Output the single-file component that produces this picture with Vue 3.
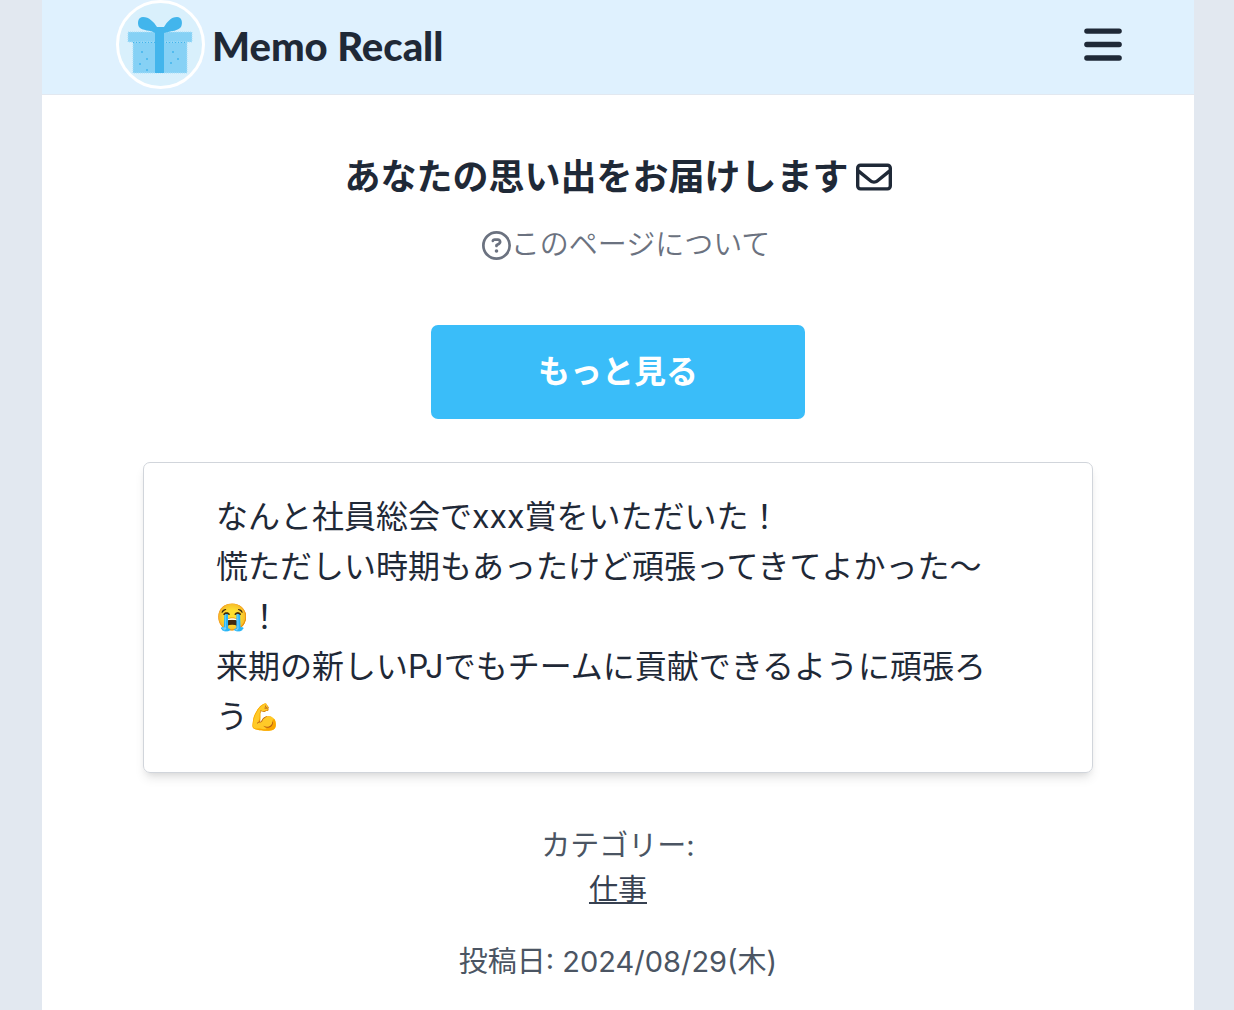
<script setup>
const memo = [
  [{ text: 'なんと社員総会でxxx賞をいただいた！' }],
  [
    { text: '慌ただしい時期もあったけど頑張ってきてよかった〜' },
    { text: '😭', emoji: true },
    { text: '！' },
  ],
  [
    { text: '来期の新しいPJでもチームに貢献できるように頑張ろ' },
    { text: 'う' },
    { text: '💪', emoji: true },
  ],
]
</script>

<template>
  <div class="page">
    <header class="header">
      <a class="brand" href="#">
        <svg class="logo" viewBox="0 0 89 89" aria-hidden="true">
          <circle cx="44.500" cy="44.500" r="43" fill="#d9f0fc" stroke="#fff" stroke-width="3" />
          <path d="M17 42h54v31H17z" fill="#86d1f5" />
          <path d="M12 32h64v10H12z" fill="#86d1f5" />
          <path d="M12 32h64v10H12zM17 42v31h54V42" stroke="#a9dff8" stroke-dasharray="1 1" fill="none" />
          <path d="M17 42.500h54" stroke="#42b5ec" stroke-dasharray="1 2" fill="none" />
          <path d="M39 31h9v42h-9z" fill="#42b5ec" />
          <path d="M39 33C35 30 26 31 23 27c-2-4-1-10 4-10 6 0 11 5 14 10h7c3-5 7-10 13-10 5 0 6 6 4 10-3 4-10 4-13 5l-4 1z" fill="#42b5ec" />
          <g fill="#42b5ec">
            <circle cx="26" cy="52" r="1" /><circle cx="31" cy="59" r="1" /><circle cx="24" cy="64" r="1" /><circle cx="31" cy="70" r="1" />
            <circle cx="57" cy="52" r="1" /><circle cx="62" cy="59" r="1" /><circle cx="55" cy="63" r="1" />
          </g>
        </svg>
        <span class="name">Memo Recall</span>
      </a>
      <button class="menu" type="button" aria-label="メニュー">
        <svg viewBox="0 0 448 512" width="38" height="43" fill="currentColor">
          <rect y="64" width="448" height="64" rx="32" />
          <rect y="224" width="448" height="64" rx="32" />
          <rect y="384" width="448" height="64" rx="32" />
        </svg>
      </button>
    </header>

    <main class="main">
      <h1 class="title">
        あなたの思い出をお届けします
        <svg viewBox="0 0 512 512" width="36" height="36" fill="currentColor" aria-hidden="true">
          <path d="M64 112c-8.800 0-16 7.200-16 16v22.100L220.500 291.700c20.700 17 50.400 17 71.100 0L464 150.100V128c0-8.800-7.200-16-16-16H64zM48 212.200V384c0 8.800 7.200 16 16 16H448c8.800 0 16-7.200 16-16V212.200L322 328.800c-38.400 31.500-93.700 31.500-132 0L48 212.200zM0 128C0 92.700 28.700 64 64 64H448c35.300 0 64 28.700 64 64V384c0 35.300-28.700 64-64 64H64c-35.300 0-64-28.700-64-64V128z" />
        </svg>
      </h1>
      <a class="about" href="#">
        <svg viewBox="0 0 512 512" width="29" height="29" fill="currentColor" aria-hidden="true">
          <path d="M464 256A208 208 0 1 0 48 256a208 208 0 1 0 416 0zM0 256a256 256 0 1 1 512 0A256 256 0 1 1 0 256zm169.800-90.700c7.900-22.300 29.100-37.300 52.800-37.300h58.300c34.900 0 63.100 28.300 63.100 63.100c0 22.600-12.100 43.500-31.700 54.800L280 264.400c-.2 13-10.900 23.600-24 23.600c-13.300 0-24-10.700-24-24V250.500c0-8.600 4.600-16.500 12.100-20.800l44.300-25.400c4.700-2.700 7.600-7.700 7.600-13.100c0-8.400-6.800-15.100-15.100-15.100H222.600c-3.400 0-6.400 2.100-7.500 5.300l-.4 1.200c-4.400 12.500-18.200 19-30.600 14.600s-19-18.200-14.600-30.600l.4-1.200zM224 352a32 32 0 1 1 64 0 32 32 0 1 1-64 0z" />
        </svg>
        <span>このページについて</span>
      </a>
      <button class="more" type="button">もっと見る</button>
      <article class="card">
        <p v-for="(line, i) in memo" :key="i"><span v-for="part in line" :key="part.text" :class="{ emoji: part.emoji }">{{ part.text }}</span></p>
      </article>
      <div class="meta">
        <p>カテゴリー:</p>
        <p><a class="category" href="#">仕事</a></p>
        <p class="date">投稿日: 2024/08/29(木)</p>
      </div>
    </main>
  </div>
</template>

<style>
body {
  margin: 0;
  background: #e2e8f0;
}
</style>

<style scoped>
.page {
  min-height: 100vh;
  margin: 0 40px 0 42px;
  background: #fff;
  color: #1f2937;
  font-family: Inter, "Noto Sans CJK JP", "Noto Color Emoji", sans-serif;
}
.header {
  display: flex;
  align-items: center;
  justify-content: space-between;
  box-sizing: border-box;
  height: 95px;
  padding: 0 72px 5px 74px;
  background: #dff1fe;
  border-bottom: 1px solid #e2e8f0;
}
.brand {
  display: flex;
  align-items: center;
  gap: 7px;
  color: inherit;
  text-decoration: none;
}
.logo {
  width: 89px;
  height: 89px;
}
.name {
  padding-top: 2px;
  font: 900 40px/48px Lato, sans-serif;
}
.menu {
  display: flex;
  padding: 0;
  border: 0;
  background: none;
  color: inherit;
}
.main {
  display: flex;
  flex-direction: column;
  align-items: center;
  padding: 60px 101px 24px;
}
.title {
  display: flex;
  align-items: center;
  gap: 7px;
  margin: 0;
  font-size: 36px;
  line-height: 44px;
}
.about {
  display: flex;
  align-items: center;
  margin: 24px 0 58px;
  padding-left: 16px;
  color: #6b7280;
  font-size: 29px;
  font-weight: 350;
  line-height: 44px;
  text-decoration: none;
}
.more {
  width: 374px;
  height: 94px;
  padding: 0 0 6px;
  border: 0;
  border-radius: 7px;
  background: #3abdf9;
  color: #fff;
  font-family: inherit;
  font-size: 32px;
  font-weight: 700;
}
.card {
  box-sizing: border-box;
  width: 100%;
  margin-top: 43px;
  padding: 29px 88px 30px 72px;
  border: 1px solid #d1d5db;
  border-radius: 7px;
  box-shadow: 0 7px 11px -2px rgb(0 0 0 / 10%), 0 4px 7px -4px rgb(0 0 0 / 10%);
  font-size: 32px;
  line-height: 50px;
}
.emoji {
  font-size: 26px;
  line-height: 32px;
  vertical-align: 2px;
}
.card p,
.meta p {
  margin: 0;
}
.meta {
  margin-top: 51px;
  color: #4b5563;
  font-size: 29px;
  line-height: 44px;
  text-align: center;
}
.category {
  color: #374151;
  text-decoration: underline;
}
.meta .date {
  margin-top: 28px;
}
</style>
